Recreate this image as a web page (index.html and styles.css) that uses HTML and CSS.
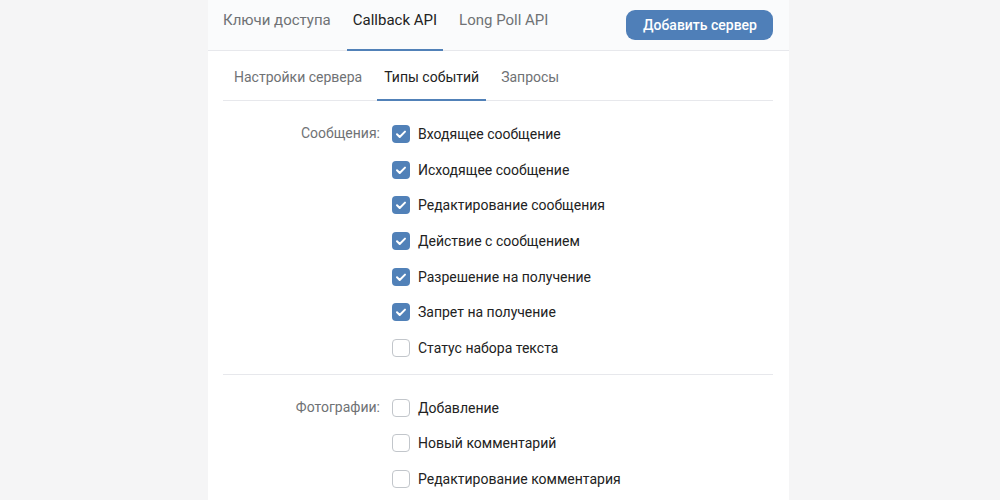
FILE: index.html
```html
<!DOCTYPE html>
<html lang="ru">
<head>
<meta charset="utf-8">
<link rel="stylesheet" href="styles.css">
</head>
<body>
<div class="panel">
  <div class="header">
    <nav class="tabs">
      <span class="tab">Ключи доступа</span>
      <span class="tab active">Callback API</span>
      <span class="tab">Long Poll API</span>
    </nav>
    <button class="btn">Добавить сервер</button>
  </div>
  <div class="content">
    <nav class="subtabs">
      <span class="subtab">Настройки сервера</span>
      <span class="subtab active">Типы событий</span>
      <span class="subtab">Запросы</span>
    </nav>
    <section class="group">
      <div class="label">Сообщения:</div>
      <div class="items">
        <label class="row"><span class="cb on"><svg viewBox="0 0 18 18"><path d="M5 9.3l2.7 2.7L13 6.6"/></svg></span>Входящее сообщение</label>
        <label class="row"><span class="cb on"><svg viewBox="0 0 18 18"><path d="M5 9.3l2.7 2.7L13 6.6"/></svg></span>Исходящее сообщение</label>
        <label class="row"><span class="cb on"><svg viewBox="0 0 18 18"><path d="M5 9.3l2.7 2.7L13 6.6"/></svg></span>Редактирование сообщения</label>
        <label class="row"><span class="cb on"><svg viewBox="0 0 18 18"><path d="M5 9.3l2.7 2.7L13 6.6"/></svg></span>Действие с сообщением</label>
        <label class="row"><span class="cb on"><svg viewBox="0 0 18 18"><path d="M5 9.3l2.7 2.7L13 6.6"/></svg></span>Разрешение на получение</label>
        <label class="row"><span class="cb on"><svg viewBox="0 0 18 18"><path d="M5 9.3l2.7 2.7L13 6.6"/></svg></span>Запрет на получение</label>
        <label class="row"><span class="cb"></span>Статус набора текста</label>
      </div>
    </section>
    <section class="group">
      <div class="label">Фотографии:</div>
      <div class="items">
        <label class="row"><span class="cb"></span>Добавление</label>
        <label class="row"><span class="cb"></span>Новый комментарий</label>
        <label class="row"><span class="cb"></span>Редактирование комментария</label>
      </div>
    </section>
  </div>
</div>
</body>
</html>
```

FILE: styles.css
```css
html, body {
  margin: 0;
  height: 100%;
}
body {
  background: #f5f5f6;
  font-family: Roboto, "Noto Sans", Arial, sans-serif;
  overflow: hidden;
}
.panel {
  width: 581px;
  margin-left: 208px;
  min-height: 100%;
  background: #fff;
}
.header {
  display: flex;
  justify-content: space-between;
  height: 50px;
  padding: 0 16px 0 9px;
  background: #fafbfc;
  border-bottom: 1px solid #e7e8ec;
}
.tabs {
  display: flex;
  gap: 10px;
}
.tab {
  padding: 10px 6px 0;
  height: 39px;
  line-height: 20px;
  font-size: 15px;
  color: #6f7275;
  border-bottom: 2px solid transparent;
}
.tab.active {
  color: #222;
  border-bottom-color: #5181b8;
}
.btn {
  margin-top: 10px;
  height: 30px;
  padding: 0 16px 0 17px;
  border: 0;
  border-radius: 9px;
  background: #4f7fb8;
  color: #fff;
  font-family: inherit;
  font-size: 14px;
  font-weight: 500;
}
.content {
  padding: 0 16px 0 15px;
}
.subtabs {
  display: flex;
  gap: 8px;
  padding-left: 4px;
  height: 49px;
  border-bottom: 1px solid #e7e8ec;
}
.subtab {
  padding: 16px 7px 0;
  height: 32px;
  line-height: 20px;
  font-size: 14px;
  color: #6f7275;
  border-bottom: 2px solid transparent;
}
.subtab.active {
  color: #222;
  border-bottom-color: #5181b8;
}
.group {
  display: grid;
  grid-template-columns: 157px 1fr;
  column-gap: 12px;
  padding: 15px 0 8px;
  border-bottom: 1px solid #e7e8ec;
}
.label {
  text-align: right;
  font-size: 14px;
  color: #6f7275;
  line-height: 35.7px;
}
.row {
  display: flex;
  align-items: center;
  gap: 8px;
  height: 35.7px;
  font-size: 14px;
  color: #222;
}
.cb {
  box-sizing: border-box;
  width: 18px;
  height: 18px;
  border-radius: 4px;
  border: 1.5px solid #c2c6cb;
  background: #fff;
  flex: none;
}
.cb.on {
  border: 0;
  background: #5181b8;
}
.cb svg {
  display: block;
  width: 18px;
  height: 18px;
  fill: none;
  stroke: #fff;
  stroke-width: 2;
  stroke-linecap: round;
  stroke-linejoin: round;
}
```
